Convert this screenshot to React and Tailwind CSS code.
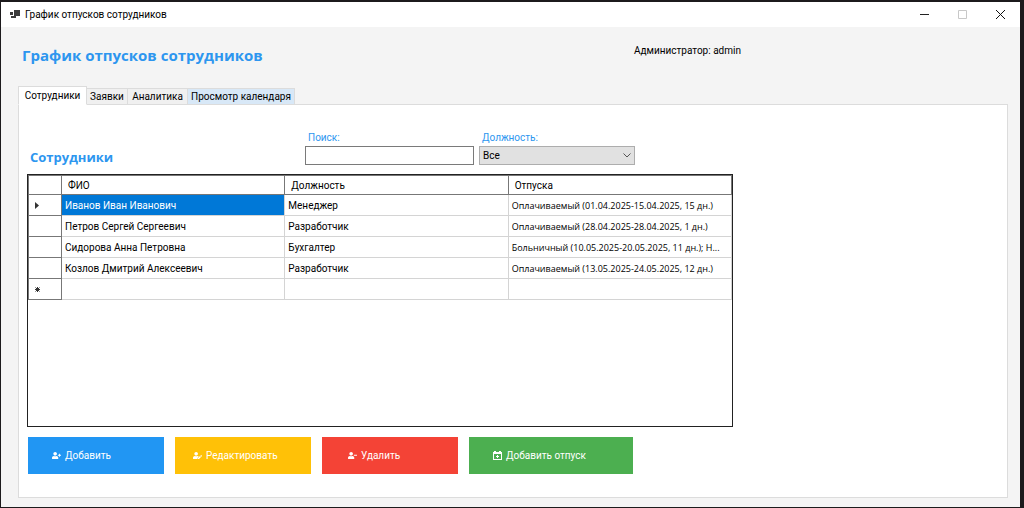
import { useState } from 'react'
import { FaUserEdit, FaUserMinus, FaUserPlus } from 'react-icons/fa'

const TABS = [
  { id: 'employees', title: 'Сотрудники', width: 'w-[69px]' },
  { id: 'requests', title: 'Заявки', width: 'w-[41px]' },
  { id: 'analytics', title: 'Аналитика', width: 'w-[60px]' },
  { id: 'calendar', title: 'Просмотр календаря', width: 'w-[107px]', hot: true }
]

const COLUMNS = ['ФИО', 'Должность', 'Отпуска']

const EMPLOYEES = [
  {
    name: 'Иванов Иван Иванович',
    position: 'Менеджер',
    vacations: 'Оплачиваемый (01.04.2025-15.04.2025, 15 дн.)'
  },
  {
    name: 'Петров Сергей Сергеевич',
    position: 'Разработчик',
    vacations: 'Оплачиваемый (28.04.2025-28.04.2025, 1 дн.)'
  },
  {
    name: 'Сидорова Анна Петровна',
    position: 'Бухгалтер',
    vacations: 'Больничный (10.05.2025-20.05.2025, 11 дн.); Н...'
  },
  {
    name: 'Козлов Дмитрий Алексеевич',
    position: 'Разработчик',
    vacations: 'Оплачиваемый (13.05.2025-24.05.2025, 12 дн.)'
  }
]

const ACTIONS = [
  { title: 'Добавить', icon: FaUserPlus, style: 'w-[136px] bg-[#2196f3] pl-6' },
  { title: 'Редактировать', icon: FaUserEdit, style: 'w-[136px] bg-[#ffc107] pl-[18px]' },
  { title: 'Удалить', icon: FaUserMinus, style: 'w-[136px] bg-[#f44336] pl-[26px]' },
  { title: 'Добавить отпуск', icon: CalendarPlus, style: 'w-[164px] bg-[#4caf50] pl-6' }
]

export default function App() {
  const [activeTab, setActiveTab] = useState('employees')

  return (
    <div className="flex min-h-screen flex-col border-t-2 border-r-4 border-b border-l border-[#1c1a1c] bg-[#f4f4f4] font-[Roboto,'Noto_Sans',sans-serif] text-[10px] leading-4 text-black">
      <TitleBar />

      <header className="flex pt-4 pl-[21px]">
        <h1 className="w-[612px] font-['Open_Sans','Noto_Sans',sans-serif] text-[15px] leading-6 font-bold text-[#2d96ef]">
          График отпусков сотрудников
        </h1>
        <span>Администратор: admin</span>
      </header>

      <main className="mt-[19px] mr-3 mb-[9px] ml-[17px] flex flex-1 flex-col">
        <nav className="z-10 -mb-px flex items-end">
          {TABS.map((tab) => (
            <Tab
              key={tab.id}
              tab={tab}
              active={tab.id === activeTab}
              onSelect={() => setActiveTab(tab.id)}
            />
          ))}
        </nav>
        <section className="flex-1 border border-[#dcdcdc] bg-white pt-[25px] pl-2">
          <EmployeeFilters />
          <EmployeeGrid />
          <div className="mt-[10px] flex gap-[11px] pl-px">
            {ACTIONS.map(({ title, icon: Icon, style }) => (
              <button
                key={title}
                type="button"
                className={`flex h-[37px] items-center gap-1 text-white ${style}`}
              >
                <Icon className="size-[9px]" />
                {title}
              </button>
            ))}
          </div>
        </section>
      </main>
    </div>
  )
}

function TitleBar() {
  return (
    <div className="flex h-[25px] items-center bg-white pr-px pl-2">
      <svg className="h-[9px] w-[11px]" viewBox="0 0 11 9" fill="#3c3c3c">
        <path d="M1 2h3v3H1zM5 0h6v6H5zM2 6h5v2H2z" />
      </svg>
      <span className="flex-1 pl-[5px]">График отпусков сотрудников</span>
      <button type="button" aria-label="Свернуть" className="flex w-[38px] justify-center">
        <svg className="size-[9px]" viewBox="0 0 9 9" stroke="#222">
          <path d="M0 4.5h9" />
        </svg>
      </button>
      <button type="button" aria-label="Развернуть" disabled className="flex w-[38px] justify-center">
        <svg className="size-[9px]" viewBox="0 0 9 9" fill="none" stroke="#c8c8c8">
          <path d="M.5.5h8v8h-8z" />
        </svg>
      </button>
      <button type="button" aria-label="Закрыть" className="flex w-[38px] justify-center">
        <svg className="size-[9px]" viewBox="0 0 9 9" stroke="#111">
          <path d="M0 0l9 9M9 0L0 9" />
        </svg>
      </button>
    </div>
  )
}

function Tab({ tab, active, onSelect }) {
  let look = 'h-[17px] border-l-0 bg-[#f0f0f0]'
  if (tab.hot) look = 'h-[17px] border-l-0 bg-[#d8e8f7]'
  if (active) look = 'h-[19px] border-b-white bg-white'

  return (
    <button
      type="button"
      onClick={onSelect}
      className={`flex items-center justify-center border border-[#dcdcdc] whitespace-nowrap ${tab.width} ${look}`}
    >
      {tab.title}
    </button>
  )
}

function EmployeeFilters() {
  return (
    <div className="flex items-end">
      <h2 className="w-[278px] pl-[3px] font-['Open_Sans','Noto_Sans',sans-serif] text-[13px] leading-4 font-bold text-[#2d96ef]">
        Сотрудники
      </h2>
      <div className="mr-[5px] w-[169px]">
        <label htmlFor="search" className="block pl-[3px] text-[#2d96ef]">
          Поиск:
        </label>
        <input
          id="search"
          className="block h-[19px] w-full border border-[#7a7a7a] bg-white px-1 outline-none"
        />
      </div>
      <div className="w-[156px]">
        <label htmlFor="position" className="block pl-[3px] text-[#2d96ef]">
          Должность:
        </label>
        <div className="relative">
          <select
            id="position"
            className="block h-[19px] w-full appearance-none border border-[#adadad] bg-[#e1e1e1] pl-[3px] outline-none"
          >
            <option>Все</option>
            <option>Менеджер</option>
            <option>Разработчик</option>
            <option>Бухгалтер</option>
          </select>
          <svg
            className="pointer-events-none absolute top-[7px] right-1 h-[5px] w-2"
            viewBox="0 0 8 5"
            fill="none"
            stroke="#555"
          >
            <path d="M.5.5L4 4 7.5.5" />
          </svg>
        </div>
      </div>
    </div>
  )
}

function EmployeeGrid() {
  return (
    <div className="mt-[9px] h-[253px] w-[706px] max-w-full border border-[#222]">
      <table className="w-full table-fixed border-collapse border-t border-l border-[#777] text-left">
        <thead>
          <tr className="h-[19px]">
            <th className="w-[33px] border-r border-b border-[#777]" />
            {COLUMNS.map((column) => (
              <th
                key={column}
                className="border-r border-b border-[#777] p-0 pt-px pl-[6px] font-normal"
              >
                {column}
              </th>
            ))}
          </tr>
        </thead>
        <tbody>
          {EMPLOYEES.map((employee, index) => (
            <tr key={employee.name} className="h-[21px]">
              <RowHeader>
                {index === 0 && (
                  <svg className="h-[7px] w-1" viewBox="0 0 4 7" fill="#333">
                    <path d="M0 0l4 3.5L0 7z" />
                  </svg>
                )}
              </RowHeader>
              <Cell selected={index === 0}>{employee.name}</Cell>
              <Cell>{employee.position}</Cell>
              <Cell long>{employee.vacations}</Cell>
            </tr>
          ))}
          <tr className="h-[21px]">
            <RowHeader>
              <svg className="size-[5px]" viewBox="0 0 5 5" stroke="#333">
                <path d="M2.5 0v5M0 2.5h5M.5.5l4 4M4.5.5l-4 4" />
              </svg>
            </RowHeader>
            <Cell />
            <Cell />
            <Cell />
          </tr>
        </tbody>
      </table>
    </div>
  )
}

function RowHeader({ children }) {
  return <th className="border-r border-b border-[#777] p-0 pl-[6px]">{children}</th>
}

function Cell({ selected, long, children }) {
  return (
    <td
      className={`overflow-hidden border-r border-b border-[#d4d4d4] p-0 pt-px pl-[3px] whitespace-nowrap ${
        selected ? 'bg-[#0078d7] text-white' : ''
      } ${long ? "font-['Open_Sans','Noto_Sans',sans-serif] text-[9px]" : ''}`}
    >
      {children}
    </td>
  )
}

function CalendarPlus({ className }) {
  return (
    <svg className={className} viewBox="0 0 9 9" fill="currentColor">
      <path
        d="M1 0h2v1h3V0h2v1h1v8H0V1h1zM1 3v5h7V3z"
        fillRule="evenodd"
      />
      <path d="M4 4h1v1h1v1H5v1H4V6H3V5h1z" />
    </svg>
  )
}
